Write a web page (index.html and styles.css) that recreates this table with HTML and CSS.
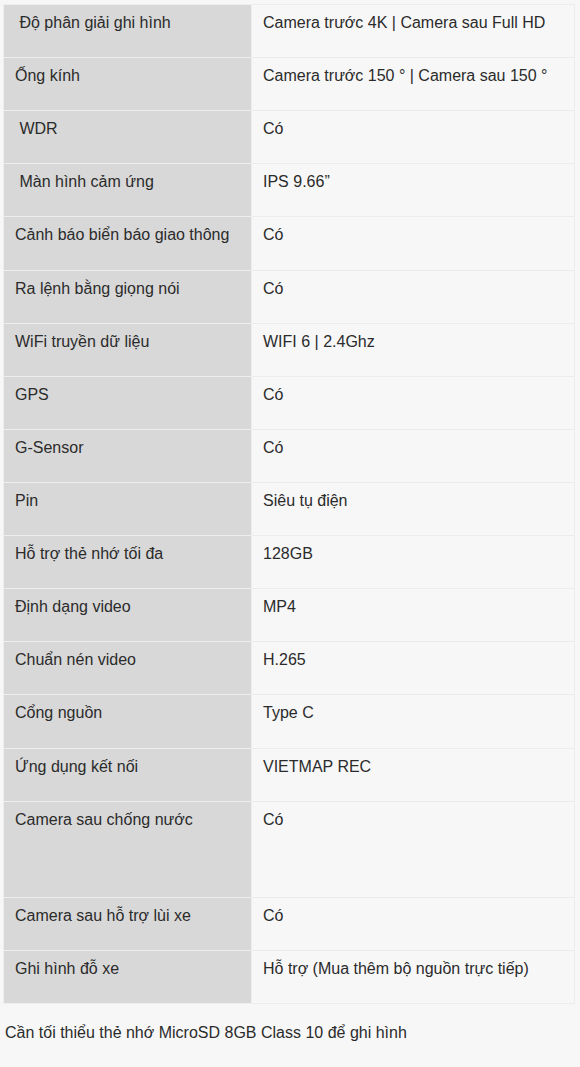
FILE: index.html
```html
<!DOCTYPE html>
<html lang="vi">
<head>
<meta charset="utf-8">
<link rel="stylesheet" href="styles.css">
</head>
<body>
<div class="wrap">
<table class="spec">
<tbody>
<tr><td class="k">&nbsp;Độ phân giải ghi hình</td><td class="v">Camera trước 4K | Camera sau Full HD</td></tr>
<tr><td class="k">Ống kính</td><td class="v">Camera trước 150 ° | Camera sau 150 °</td></tr>
<tr><td class="k">&nbsp;WDR</td><td class="v">Có</td></tr>
<tr><td class="k">&nbsp;Màn hình cảm ứng</td><td class="v">IPS 9.66”</td></tr>
<tr><td class="k">Cảnh báo biển báo giao thông</td><td class="v">Có</td></tr>
<tr><td class="k">Ra lệnh bằng giọng nói</td><td class="v">Có</td></tr>
<tr><td class="k">WiFi truyền dữ liệu</td><td class="v">WIFI 6 | 2.4Ghz</td></tr>
<tr><td class="k">GPS</td><td class="v">Có</td></tr>
<tr><td class="k">G-Sensor</td><td class="v">Có</td></tr>
<tr><td class="k">Pin</td><td class="v">Siêu tụ điện</td></tr>
<tr><td class="k">Hỗ trợ thẻ nhớ tối đa</td><td class="v">128GB</td></tr>
<tr><td class="k">Định dạng video</td><td class="v">MP4</td></tr>
<tr><td class="k">Chuẩn nén video</td><td class="v">H.265</td></tr>
<tr><td class="k">Cổng nguồn</td><td class="v">Type C</td></tr>
<tr><td class="k">Ứng dụng kết nối</td><td class="v">VIETMAP REC</td></tr>
<tr class="tall"><td class="k">Camera sau chống nước</td><td class="v">Có</td></tr>
<tr><td class="k">Camera sau hỗ trợ lùi xe</td><td class="v">Có</td></tr>
<tr><td class="k">Ghi hình đỗ xe</td><td class="v">Hỗ trợ (Mua thêm bộ nguồn trực tiếp)</td></tr>
</tbody>
</table>
<p class="note">Cần tối thiểu thẻ nhớ MicroSD 8GB Class 10 để ghi hình</p>
</div>
</body>
</html>
```
FILE: styles.css
```css
html, body {
  margin: 0;
  padding: 0;
  background: #f7f7f7;
}
body {
  font-family: "Liberation Sans", Arial, sans-serif;
  font-size: 16px;
  color: #2b2b2b;
}
.wrap {
  padding: 4px 5px 0 3px;
}
.spec {
  width: 572px;
  border-collapse: collapse;
  border: 1px solid #eaeaea;
}
.spec td {
  border: 1px solid #ececec;
  padding: 6px 10px 22.12px 11px;
  line-height: 24px;
  vertical-align: top;
  white-space: nowrap;
}
.spec td.k {
  width: 226px;
  background: #d8d8d8;
  border-color: #eeeeee;
}
.spec td.v {
  background: #f7f7f7;
  padding-left: 11px;
}
.spec tr.tall td {
  height: 67px;
}
.note {
  margin: 17px 0 0 2px;
  line-height: 24px;
}
```
